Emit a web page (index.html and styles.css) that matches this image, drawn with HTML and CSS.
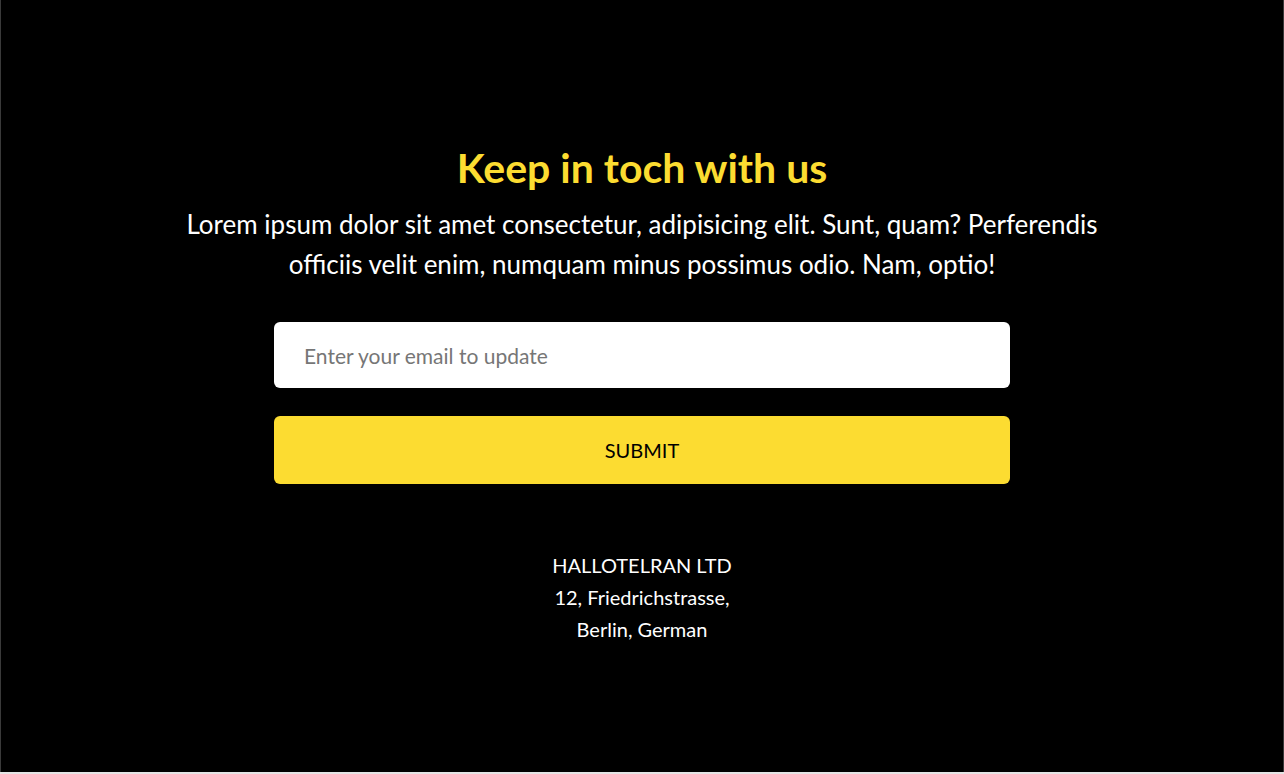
FILE: index.html
```html
<!DOCTYPE html>
<html lang="en">
<head>
<meta charset="utf-8">
<title>Keep in touch</title>
<link rel="stylesheet" href="styles.css">
</head>
<body>
<section class="contact">
  <h1 class="contact-title">Keep in toch with us</h1>
  <p class="contact-text">Lorem ipsum dolor sit amet consectetur, adipisicing elit. Sunt, quam? Perferendis officiis velit enim, numquam minus possimus odio. Nam, optio!</p>
  <form class="contact-form">
    <input class="contact-input" type="email" placeholder="Enter your email to update">
    <button class="contact-button" type="button">SUBMIT</button>
  </form>
  <address class="contact-address">
    HALLOTELRAN LTD<br>
    12, Friedrichstrasse,<br>
    Berlin, German
  </address>
</section>
</body>
</html>
```

FILE: styles.css
```css
html, body {
  margin: 0;
  padding: 0;
  background: #e4e4e4;
}

body {
  font-family: "Lato", "Open Sans", sans-serif;
}

.contact {
  box-sizing: border-box;
  height: 772px;
  background: #000;
  border-left: 1px solid #3a3a3a;
  border-right: 1px solid #3a3a3a;
  display: flex;
  flex-direction: column;
  align-items: center;
  padding-top: 140px;
  color: #fff;
}

.contact-title {
  margin: 0;
  font-size: 41px;
  line-height: 56px;
  font-weight: 700;
  color: #fcdc31;
}

.contact-text {
  margin: 8px 0 0;
  max-width: 940px;
  font-size: 26px;
  line-height: 40px;
  text-align: center;
}

.contact-form {
  margin-top: 38px;
  width: 736px;
  display: flex;
  flex-direction: column;
  gap: 28px;
}

.contact-input {
  box-sizing: border-box;
  height: 66px;
  border: none;
  border-radius: 6px;
  padding: 0 30px;
  font-family: inherit;
  font-size: 21px;
  color: #222;
  background: #fff;
  outline: none;
}

.contact-input::placeholder {
  color: #767676;
}

.contact-button {
  height: 68px;
  border: none;
  border-radius: 6px;
  background: #fcdc31;
  color: #000;
  font-family: inherit;
  font-size: 20px;
  cursor: pointer;
}

.contact-address {
  margin-top: 65px;
  font-style: normal;
  font-size: 20px;
  line-height: 32px;
  text-align: center;
}
```
